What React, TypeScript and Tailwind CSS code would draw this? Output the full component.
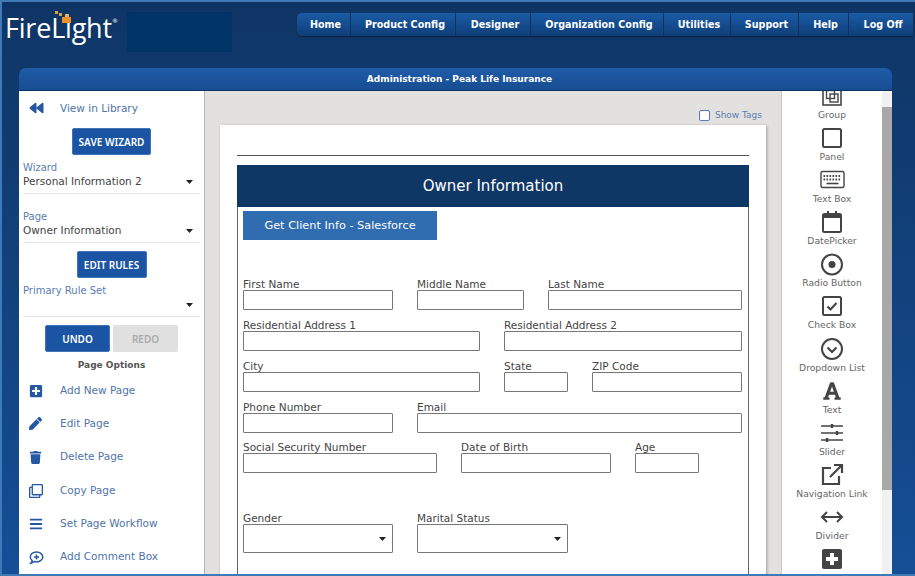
import { FaBackward, FaPlusSquare, FaPen, FaTrash, FaRegClone, FaBars, FaFont } from 'react-icons/fa';

const navItems = [
  { label: 'Home', width: 'w-[54px]' },
  { label: 'Product Config', width: 'w-[105px]' },
  { label: 'Designer', width: 'w-[75px]' },
  { label: 'Organization Config', width: 'w-[133px]' },
  { label: 'Utilities', width: 'w-[67px]' },
  { label: 'Support', width: 'w-[68px]' },
  { label: 'Help', width: 'w-[50px]' },
  { label: 'Log Off', width: 'w-[64px]' },
];

const Caret = () => (
  <svg width="7" height="4" viewBox="0 0 7 4" className="shrink-0">
    <path d="M0 0h7L3.5 4z" fill="#222" />
  </svg>
);

const Icon = ({ children, w = 24, h = 24 }: { children: React.ReactNode; w?: number; h?: number }) => (
  <svg width={w} height={h} viewBox="0 0 24 24" fill="none" stroke="#444" strokeWidth="2">
    {children}
  </svg>
);

const paletteItems = [
  {
    label: 'Group',
    icon: (
      <Icon>
        <rect x="3" y="3" width="18" height="18" strokeWidth="1.6" />
        <rect x="6.5" y="6.5" width="8" height="8" strokeWidth="1.4" />
        <rect x="10" y="10" width="8" height="8" strokeWidth="1.4" />
      </Icon>
    ),
  },
  { label: 'Panel', icon: <Icon><rect x="3" y="3" width="18" height="18" rx="1.5" /></Icon> },
  {
    label: 'Text Box',
    icon: (
      <Icon w={25}>
        <rect x="0.5" y="3.5" width="23" height="16" rx="1.5" strokeWidth="1.4" />
        <path d="M3 8h18M3 11.500h18" strokeWidth="2" strokeDasharray="1.6 1.4" />
        <path d="M6 15.500h12" strokeWidth="1.6" />
      </Icon>
    ),
  },
  {
    label: 'DatePicker',
    icon: (
      <Icon>
        <rect x="3" y="4" width="18" height="18" rx="1.5" />
        <path d="M3 6h18" strokeWidth="4" />
        <path d="M8 1v4M16 1v4" strokeWidth="2" />
      </Icon>
    ),
  },
  {
    label: 'Radio Button',
    icon: (
      <Icon>
        <circle cx="12" cy="12.500" r="10" />
        <circle cx="12" cy="12.500" r="3.5" fill="#444" stroke="none" />
      </Icon>
    ),
  },
  {
    label: 'Check Box',
    icon: (
      <Icon>
        <rect x="3" y="3" width="18" height="18" rx="1.5" />
        <path d="M7.5 12.500l3 3 6-6.500" strokeWidth="2.2" />
      </Icon>
    ),
  },
  {
    label: 'Dropdown List',
    icon: (
      <Icon>
        <circle cx="12" cy="12" r="10" />
        <path d="M7.5 10.500l4.500 4.500 4.500-4.500" strokeWidth="2.2" />
      </Icon>
    ),
  },
  { label: 'Text', icon: <FaFont size={20} color="#444" /> },
  {
    label: 'Slider',
    icon: (
      <Icon>
        <path d="M1 5h22M1 12h22M1 19h22" strokeWidth="1.6" />
        <path d="M12 3v4M17 10v4M7 17v4" strokeWidth="2.4" />
      </Icon>
    ),
  },
  {
    label: 'Navigation Link',
    icon: (
      <Icon>
        <path d="M11 5H3v16h16v-8" strokeWidth="2.2" />
        <path d="M10 14L22 2M14 2h8v8" strokeWidth="2.2" />
      </Icon>
    ),
  },
  {
    label: 'Divider',
    icon: (
      <Icon>
        <path d="M2 12h20M7 7l-5 5 5 5M17 7l5 5-5 5" strokeWidth="2" />
      </Icon>
    ),
  },
  {
    label: '',
    icon: (
      <Icon>
        <rect x="2" y="2" width="20" height="20" rx="2" fill="#444" stroke="none" />
        <path d="M12 6v12M6 12h12" stroke="#fff" strokeWidth="4" />
      </Icon>
    ),
  },
];

const pageOptions = [
  { label: 'Add New Page', icon: <FaPlusSquare size={14} /> },
  { label: 'Edit Page', icon: <FaPen size={13} /> },
  { label: 'Delete Page', icon: <FaTrash size={13} /> },
  { label: 'Copy Page', icon: <FaRegClone size={14} /> },
  { label: 'Set Page Workflow', icon: <FaBars size={14} /> },
  {
    label: 'Add Comment Box',
    icon: (
      <svg width="15" height="15" viewBox="0 0 24 24" fill="none" stroke="currentColor" strokeWidth="2.4">
        <path d="M12 3c5.500 0 10 3.400 10 8s-4.500 8-10 8c-1.300 0-2.500-.2-3.600-.5C6.800 20 5 21 3 21c1-1 2-2.500 2.100-4C3.200 15.500 2 13.400 2 11c0-4.600 4.500-8 10-8z" />
        <path d="M12 7v8M8 11h8" />
      </svg>
    ),
  },
];

const Field = ({ label, width, tall }: { label: string; width: string; tall?: boolean }) => (
  <div className={`${width} shrink-0`}>
    <div className="text-[10.5px] leading-[11px] h-[11px] text-[#444] whitespace-nowrap">{label}</div>
    <div
      className={`border border-[#777] rounded-[1px] bg-white flex items-center justify-end pr-[6px] ${
        tall ? 'h-[29px]' : 'h-[20px]'
      }`}
    >
      {tall && <Caret />}
    </div>
  </div>
);

const SideSelect = ({ label, value, className }: { label: string; value: string; className: string }) => (
  <div className={`mx-[4px] shrink-0 border-b border-[#e4e4e4] h-[32px] ${className}`}>
    <div className="text-[10px] leading-[12px] text-[#5a7db0]">{label}</div>
    <div className="flex items-center justify-between pr-[7px] h-[16px] text-[10.5px] text-[#444]">
      <span className="whitespace-nowrap">{value}</span>
      <Caret />
    </div>
  </div>
);

const blueBtn = "h-[27px] pt-px bg-[#1b54a3] border border-[#3f74b8] rounded-[2px] text-white text-[10px] font-semibold font-['Noto_Sans',sans-serif] whitespace-nowrap flex items-center justify-center";

export default function App() {
  return (
    <div className="w-[915px] h-[576px] overflow-hidden flex flex-col border-t-2 border-l-2 border-b-2 border-[#3f7ab8] bg-gradient-to-b from-[#0f3565] to-[#154f96] font-['DejaVu_Sans',sans-serif]">
      {/* Top bar */}
      <div className="h-[64px] shrink-0 flex items-start">
        <div className="w-[125px] shrink-0 flex items-start pl-[3px] pt-[7px] relative">
          <span className="font-['Open_Sans',sans-serif] font-normal text-white text-[27px] leading-[38px] tracking-[-0.2px]">FireLight</span>
          <span className="text-white text-[6px] leading-none mt-[9px]">®</span>
          <svg width="18" height="14" viewBox="0 0 18 14" className="absolute left-[53px] top-[9px]">
            <rect x="0" y="0" width="3" height="3" fill="#d9a050" />
            <rect x="4" y="2" width="3" height="3" fill="#d9a050" />
            <rect x="10" y="3" width="4" height="3" fill="#e8b060" />
            <rect x="7" y="6" width="9" height="6" fill="#f0902a" />
          </svg>
        </div>
        <div className="w-[105px] h-[40px] mt-[10px] bg-[#003366] shrink-0" />
        <div className="ml-[65px] mt-[11px] h-[23px] flex rounded-l-[5px] overflow-hidden bg-gradient-to-b from-[#1a5ba6] to-[#0f3e78] shadow-[0_1px_1px_rgba(0,0,0,0.4)]">
          {navItems.map((item) => (
            <div
              key={item.label}
              className={`${item.width} flex items-center justify-center pt-px pl-[4px] border-r border-[#0d3160] text-white font-bold text-[9.6px] whitespace-nowrap last:border-r-0`}
            >
              {item.label}
            </div>
          ))}
        </div>
      </div>

      {/* Panel */}
      <div className="ml-[17px] w-[873px] flex-1 min-h-0 flex flex-col mt-[2px]">
        <div className="h-[23px] shrink-0 rounded-t-[7px] bg-gradient-to-b from-[#1f5ca8] to-[#174d92] border-b border-[#0d3160] flex items-center justify-center pl-[8px] pt-px text-white font-bold text-[9px]">
          Administration - Peak Life Insurance
        </div>
        <div className="flex-1 min-h-0 flex overflow-hidden">
          {/* Left sidebar */}
          <div className="w-[186px] shrink-0 bg-white border-r border-[#b5b5b5] flex flex-col">
            <div className="h-[36px] shrink-0 pl-[10px] pt-[9px] flex items-start text-[#4f74aa] text-[10.5px]">
              <FaBackward size={14} className="text-[#2558a3] w-[15px] mr-[16px] mt-px" />
              <span className="leading-[16px]">View in Library</span>
            </div>
            <div className="flex shrink-0 justify-center mt-[1px]">
              <button className={`${blueBtn} w-[79px]`}>SAVE WIZARD</button>
            </div>
            <SideSelect label="Wizard" value="Personal Information 2" className="mt-[7px]" />
            <SideSelect label="Page" value="Owner Information" className="mt-[17px]" />
            <div className="flex shrink-0 justify-center mt-[8px]">
              <button className={`${blueBtn} w-[70px]`}>EDIT RULES</button>
            </div>
            <SideSelect label="Primary Rule Set" value="" className="mt-[7px]" />
            <div className="flex shrink-0 justify-center gap-[3px] mt-[8px]">
              <button className={`${blueBtn} w-[65px]`}>UNDO</button>
              <button className="w-[65px] h-[27px] pt-px bg-[#e0e0e0] rounded-[2px] text-[#aaa] text-[10px] font-semibold font-['Noto_Sans',sans-serif]">REDO</button>
            </div>
            <div className="shrink-0 text-center font-bold text-[9px] text-[#555] mt-[7px] leading-[12px]">Page Options</div>
            <div className="mt-[3px] shrink-0 flex flex-col">
              {pageOptions.map((opt) => (
                <div key={opt.label} className="h-[33.3px] shrink-0 flex items-center pl-[10px] text-[#4f74aa] text-[10.5px]">
                  <span className="w-[31px] text-[#2558a3] flex">{opt.icon}</span>
                  <span className="whitespace-nowrap">{opt.label}</span>
                </div>
              ))}
            </div>
          </div>

          {/* Canvas */}
          <div className="w-[576px] shrink-0 bg-[#e2e1df] flex flex-col pl-[15px]">
            <div className="h-[34px] shrink-0 w-[546px] flex items-start justify-end pt-[19px] pr-[4px]">
              <span className="w-[11px] h-[11px] border border-[#5a7db0] rounded-[2px] bg-white mr-[5px]" />
              <span className="text-[9px] leading-[11px] text-[#5a7db0]">Show Tags</span>
            </div>
            <div className="w-[546px] flex-1 bg-white shadow-[1px_1px_3px_rgba(0,0,0,0.3)] px-[17px] pt-[30px]">
              <div className="h-px bg-[#555]" />
              <div className="mt-[9px] h-[42px] bg-[#0f3766] flex items-center justify-center pt-px text-white text-[15px]">
                Owner Information
              </div>
              <div className="h-[400px] border-x border-[#666] px-[5px] pt-[4px]">
                <div className="w-[194px] h-[29px] bg-[#2f6cb0] text-white text-[11.3px] flex items-center justify-center pt-[2px]">
                  Get Client Info - Salesforce
                </div>
                <div className="flex gap-[24px] mt-[39px]">
                  <Field label="First Name" width="w-[150px]" />
                  <Field label="Middle Name" width="w-[107px]" />
                  <Field label="Last Name" width="w-[194px]" />
                </div>
                <div className="flex gap-[24px] mt-[10px]">
                  <Field label="Residential Address 1" width="w-[237px]" />
                  <Field label="Residential Address 2" width="w-[238px]" />
                </div>
                <div className="flex gap-[24px] mt-[10px]">
                  <Field label="City" width="w-[237px]" />
                  <Field label="State" width="w-[64px]" />
                  <Field label="ZIP Code" width="w-[150px]" />
                </div>
                <div className="flex gap-[24px] mt-[10px]">
                  <Field label="Phone Number" width="w-[150px]" />
                  <Field label="Email" width="w-[325px]" />
                </div>
                <div className="flex gap-[24px] mt-[9px]">
                  <Field label="Social Security Number" width="w-[194px]" />
                  <Field label="Date of Birth" width="w-[150px]" />
                  <Field label="Age" width="w-[64px]" />
                </div>
                <div className="flex gap-[24px] mt-[40px]">
                  <Field label="Gender" width="w-[150px]" tall />
                  <Field label="Marital Status" width="w-[151px]" tall />
                </div>
              </div>
            </div>
          </div>

          {/* Right palette */}
          <div className="w-[101px] shrink-0 bg-white border-l border-[#c8c8c8] overflow-hidden flex flex-col items-center">
            <div className="-mt-[7px] flex flex-col items-center">
              {paletteItems.map((item) => (
                <div key={item.label || 'add'} className="h-[42.100px] shrink-0 w-[100px] flex flex-col items-center">
                  <div className="h-[24px] flex items-center justify-center">{item.icon}</div>
                  <div className="text-[9.2px] leading-[13px] text-[#666] whitespace-nowrap">{item.label}</div>
                </div>
              ))}
            </div>
          </div>

          {/* Scrollbar */}
          <div className="w-[10px] shrink-0 bg-[#f1f1f1] flex flex-col">
            <div className="h-[16px] shrink-0" />
            <div className="h-[383px] bg-[#a8a8a8]" />
          </div>
        </div>
      </div>
    </div>
  );
}
